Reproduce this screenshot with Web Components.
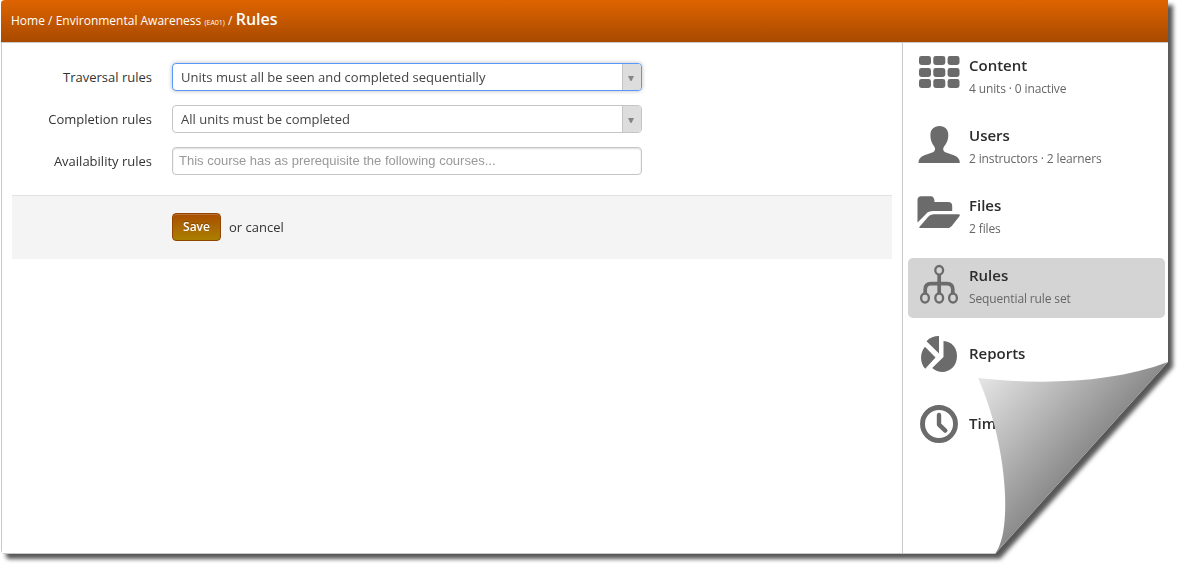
<!DOCTYPE html>
<html lang="en"><head><meta charset="utf-8"><title>Rules</title>
<style>html,body{margin:0;background:#fff;overflow:hidden}body{font:13px/20px "Open Sans",sans-serif;color:#333}</style></head>
<body>
<course-page>
<crumb-bar slot="head"></crumb-bar>
<rules-form>
<form-row label="Traversal rules"><select-box focused>Units must all be seen and completed sequentially</select-box></form-row>
<form-row label="Completion rules"><select-box>All units must be completed</select-box></form-row>
<form-row label="Availability rules"><text-box>This course has as prerequisite the following courses...</text-box></form-row>
<save-button slot="actions">Save</save-button><span slot="actions">or cancel</span>
</rules-form>
<side-item slot="side" name="Content" note="4 units · 0 inactive"><svg width="44" height="44" viewBox="0 0 44 44" fill="#6b6b6b"><g id="r"><rect x="2" y="3" width="12" height="9" rx="2.4"/><rect x="16.300" y="3" width="12" height="9" rx="2.400"/><rect x="30.600" y="3" width="11.900" height="9" rx="2.400"/></g><use href="#r" y="12"/><use href="#r" y="23"/></svg></side-item>
<side-item slot="side" name="Users" note="2 instructors · 2 learners"><svg width="44" height="44" viewBox="0 0 44 44" fill="#6b6b6b"><path d="M22.500 3C17 3 13.400 6.500 13.400 12c0 5 1.200 8 4 11.700 1.200 1.800.8 4.500-1.500 5.500l-8.500 3C3.500 33.700 1.500 36 1.500 40h41.300c0-4-2-6.300-6-7.800l-8.500-3c-2.300-1-2.600-3.700-1.400-5.500C30 20 31.300 17 31.300 12c0-5.500-3.300-9-8.800-9z"/></svg></side-item>
<side-item slot="side" name="Files" note="2 files"><svg width="44" height="44" viewBox="0 0 44 44" fill="#6b6b6b"><path d="M.5 29.500V7C.5 4.500 2 3.300 4 3.300h9.500C16 3.300 17.500 5 17.500 9H31c3 0 4.200 1.500 4.200 4v5H16c-3 0-5.200.8-7 3z"/><path d="M2.800 33.500 11 24c1.700-2 3.500-2.800 6-2.800h24.500c1.500 0 1.700.9.9 2l-7 9c-1.500 2-3.300 2.800-5.500 2.800H3.500c-1.500 0-1.600-.5-.7-1.500z"/></svg></side-item>
<side-item slot="side" active name="Rules" note="Sequential rule set"><svg width="44" height="44" viewBox="0 0 44 44" fill="none" stroke="#6b6b6b"><path d="M22.200 11.500v19.500M8.200 31v-4.500c0-4 2-5.900 6-5.900h15.600c4 0 6 1.900 6 5.900V31" stroke-width="3.700"/><g stroke-width="2.300"><ellipse cx="22.200" cy="7.300" rx="3.900" ry="4.300"/><ellipse cx="8" cy="35" rx="3.900" ry="4.500"/><ellipse cx="22.200" cy="35" rx="3.900" ry="4.500"/><ellipse cx="36" cy="35" rx="3.900" ry="4.500"/></g></svg></side-item>
<side-item slot="side" name="Reports"><svg width="44" height="44" viewBox="0 0 44 44" fill="#6b6b6b"><path d="M9.500 8.300C13 4.500 17 3 22 3v17.500zM8 13.800l10.500 10.700L8.200 35.800C3 30 2.500 20 8 13.800zM26.500 8c8.500.5 13.500 7 13.500 15 0 14.500-15 20.500-24.800 12L26.500 24z"/></svg></side-item>
<side-item slot="side" name="Timeline"><svg width="44" height="44" viewBox="0 0 44 44" fill="none" stroke="#6b6b6b"><circle cx="22" cy="21" r="16.500" stroke-width="4.900"/><path d="M22 12v9.600l6.300 6" stroke-width="4.400" stroke-linecap="round" stroke-linejoin="round"/></svg></side-item>
</course-page>
<script>
const define=(name,html,setup)=>customElements.define(name,class extends HTMLElement{
constructor(){super();this.attachShadow({mode:'open'}).innerHTML=html;}
connectedCallback(){if(setup)setup(this,this.shadowRoot);}
});
define('course-page',`<style>
:host{display:block;position:relative;width:1183px;height:569px;overflow:hidden}
.shadow{width:1168px;height:554px;filter:drop-shadow(5px 5px 2px rgba(0,0,0,.66))}
.sheet{box-sizing:border-box;width:1168px;height:554px;display:flex;flex-direction:column;background:#fff;clip-path:path('M1 4Q1 0 5 0H1168V362L995 554H5Q1 554 1 550Z');border-left:2px solid #c8c8c8;border-bottom:1px solid #c8c8c8}
.cols{display:flex;flex:1;min-height:0}main{width:900px}
aside{box-sizing:border-box;flex:1;border-left:1px solid #c8c8c8;padding:5px 3px 0 5px;display:flex;flex-direction:column;gap:10px}
.curl{position:absolute;left:970px;top:355px}
</style><div class="shadow"><div class="sheet"><slot name="head"></slot><div class="cols"><main><slot></slot></main><aside><slot name="side"></slot></aside></div></div></div>
<svg class="curl" width="200" height="201" viewBox="970 355 200 201"><defs><linearGradient id="g" gradientUnits="userSpaceOnUse" x1="978" y1="378" x2="1079" y2="469"><stop offset="0" stop-color="#e6e6e6"/><stop offset=".5" stop-color="#b8b8b8"/><stop offset="1" stop-color="#888"/></linearGradient></defs><path fill="url(#g)" d="M978 378C1042 385 1112 383 1168 362L995 554C1014 530 1006 440 978 378Z"/></svg>`);
define('crumb-bar',`<style>:host{display:block;box-sizing:border-box;height:43px;flex:none;margin-left:-2px;padding:9px 0 0 11px;background:linear-gradient(#df6400,#a84a00);border-bottom:1px solid #c8c8c8;color:#fff;font-size:12px;line-height:20px;white-space:nowrap}
small{font-size:7px}b{font-size:16px;font-weight:600}nav{display:flex;align-items:baseline;gap:3.2px}</style><nav><span>Home</span><span>/</span><span>Environmental Awareness</span><small>(EA01)</small><span>/</span><b>Rules</b></nav>`);
define('rules-form',`<style>:host{display:block;padding:20px 10px 0}.fields{display:flex;flex-direction:column;gap:14px}
.actions{display:flex;align-items:center;gap:8px;box-sizing:border-box;height:64px;margin-top:20px;padding:0 0 2px 160px;background:#f4f4f4;border-top:1px solid #e2e2e2}</style><div class="fields"><slot></slot></div><div class="actions"><slot name="actions"></slot></div>`);
define('form-row',`<style>:host{display:flex;align-items:center;gap:20px;height:28px}label{width:140px;text-align:right;white-space:nowrap}</style><label></label><slot></slot>`,(e,s)=>s.querySelector('label').textContent=e.getAttribute('label'));
define('select-box',`<style>:host{box-sizing:border-box;display:flex;width:470px;height:28px;border:1px solid #c5c5c5;border-radius:4px;background:#fff;color:#444;line-height:26px;overflow:hidden}
:host([focused]){border-color:#5897fb;box-shadow:0 0 4px rgba(0,0,0,.28)}
span{flex:1;padding-left:8px}i{display:flex;align-items:center;box-sizing:border-box;padding:3px 0 0 4px;width:19px;background:#ddd;border-left:1px solid #c5c5c5}</style><span><slot></slot></span><i><svg width="8" height="6"><path d="M1 0h6L4.500 5h-1z" fill="#858585"/></svg></i>`);
define('text-box',`<style>:host{box-sizing:border-box;width:470px;height:28px;border:1px solid #c5c5c5;border-radius:4px;background:#fff;box-shadow:inset 0 1px 2px #ddd;padding-left:6px;color:#999;font:13px/25px "Liberation Sans",sans-serif}</style><slot></slot>`);
define('save-button',`<style>:host{box-sizing:border-box;width:49px;height:28px;border:1px solid #924500;border-radius:4px;background:linear-gradient(#a94d00,#aa8000);box-shadow:inset 0 1px rgba(255,255,255,.2);color:#fff;font-size:12px;font-weight:600;line-height:26px;text-align:center;text-shadow:0 -1px rgba(0,0,0,.25)}</style><slot></slot>`);
define('side-item',`<style>:host{display:flex;box-sizing:border-box;height:60px;padding:5px 9px;gap:8px;border-radius:5px}:host([active]){background:#d4d4d4}
.t{display:flex;flex-direction:column;gap:4px}:host(:not([note])) .t{padding-top:8px}h3{margin:2px 0 0;font-size:15px;font-weight:600;line-height:20px;color:#2c2c2c}p{margin:0;font-size:12px;line-height:20px;letter-spacing:-.13px;color:#666;white-space:nowrap}::slotted(svg){flex:none}</style><slot></slot><div class="t"><h3></h3><p></p></div>`,(e,s)=>{s.querySelector('h3').textContent=e.getAttribute('name');s.querySelector('p').textContent=e.getAttribute('note')||'';});
</script></body></html>
